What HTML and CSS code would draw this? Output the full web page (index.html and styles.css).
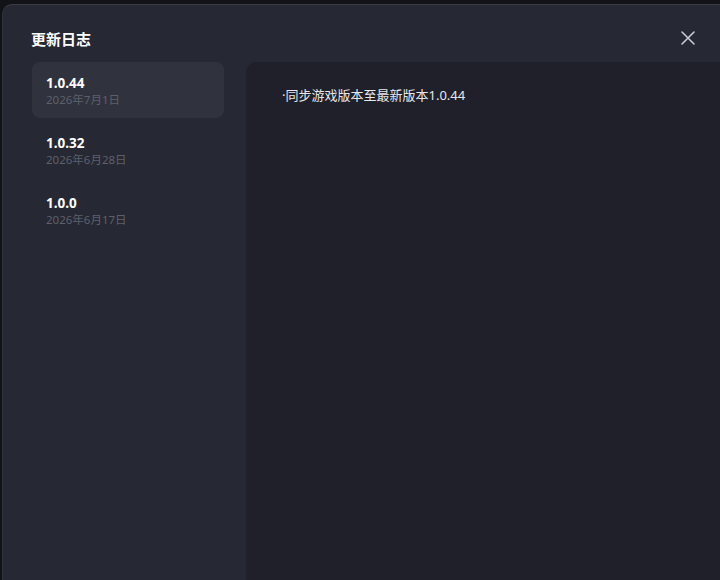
FILE: index.html
```html
<!DOCTYPE html>
<html lang="zh-CN">
<head>
    <meta charset="UTF-8">
    <meta name="viewport" content="width=device-width, initial-scale=1.0">
    <title>更新日志</title>
    <link rel="stylesheet" href="styles.css">
</head>
<body>

    <div class="modal">
        <div class="modal-head">
            <h1 class="modal-title">更新日志</h1>
            <button class="close-btn" aria-label="关闭">
                <svg width="16" height="16" viewBox="0 0 16 16">
                    <path d="M2 2 L14 14 M14 2 L2 14" stroke="#c9cbd2" stroke-width="1.6" stroke-linecap="round"/>
                </svg>
            </button>
        </div>

        <div class="modal-body">
            <ul class="version-list">
                <li class="version-item active">
                    <span class="version-no">1.0.44</span>
                    <span class="version-date">2026年7月1日</span>
                </li>
                <li class="version-item">
                    <span class="version-no">1.0.32</span>
                    <span class="version-date">2026年6月28日</span>
                </li>
                <li class="version-item">
                    <span class="version-no">1.0.0</span>
                    <span class="version-date">2026年6月17日</span>
                </li>
            </ul>

            <div class="log-panel">
                <p class="log-line">·同步游戏版本至最新版本1.0.44</p>
            </div>
        </div>
    </div>

</body>
</html>
```

FILE: styles.css
```css
html, body{
    height: 100%;
}
body{
    margin: 0;
    background-color: #121316;
    font-family: "Noto Sans", "Noto Sans CJK SC", sans-serif;
    overflow: hidden;
}

.modal{
    margin: 4px 0 0 2px;
    height: 600px;
    background-color: #262833;
    border-top: 1px solid #3a3c46;
    border-left: 1px solid #30323c;
    border-radius: 10px 0 0 0;
    display: flex;
    flex-direction: column;
    box-sizing: border-box;
}

.modal-head{
    height: 57px;
    padding: 9px 23px 0 28px;
    display: flex;
    align-items: center;
    justify-content: space-between;
    box-sizing: border-box;
}
.modal-title{
    margin: 0;
    font-size: 15px;
    font-weight: bold;
    color: #ffffff;
}
.close-btn{
    width: 18px;
    height: 18px;
    padding: 0;
    border: none;
    background: none;
    display: flex;
    align-items: center;
    justify-content: center;
    cursor: pointer;
}

.modal-body{
    flex: 1;
    display: flex;
    gap: 22px;
    padding-left: 29px;
}

.version-list{
    width: 192px;
    margin: 0;
    padding: 0;
    list-style: none;
    display: flex;
    flex-direction: column;
    gap: 4px;
}
.version-item{
    height: 56px;
    padding: 12px 14px 0 14px;
    border-radius: 8px;
    display: flex;
    flex-direction: column;
    box-sizing: border-box;
    cursor: pointer;
}
.version-item.active{
    background-color: #30323e;
}
.version-no{
    font-size: 13.5px;
    line-height: 18px;
    font-weight: bold;
    color: #ffffff;
}
.version-date{
    font-size: 11.5px;
    line-height: 16px;
    color: #5d606b;
}

.log-panel{
    flex: 1;
    background-color: #1f2029;
    border-radius: 10px 0 0 0;
    padding: 24px 36px;
}
.log-line{
    margin: 0;
    font-size: 13px;
    line-height: 18px;
    color: #e8e8ea;
}
```
